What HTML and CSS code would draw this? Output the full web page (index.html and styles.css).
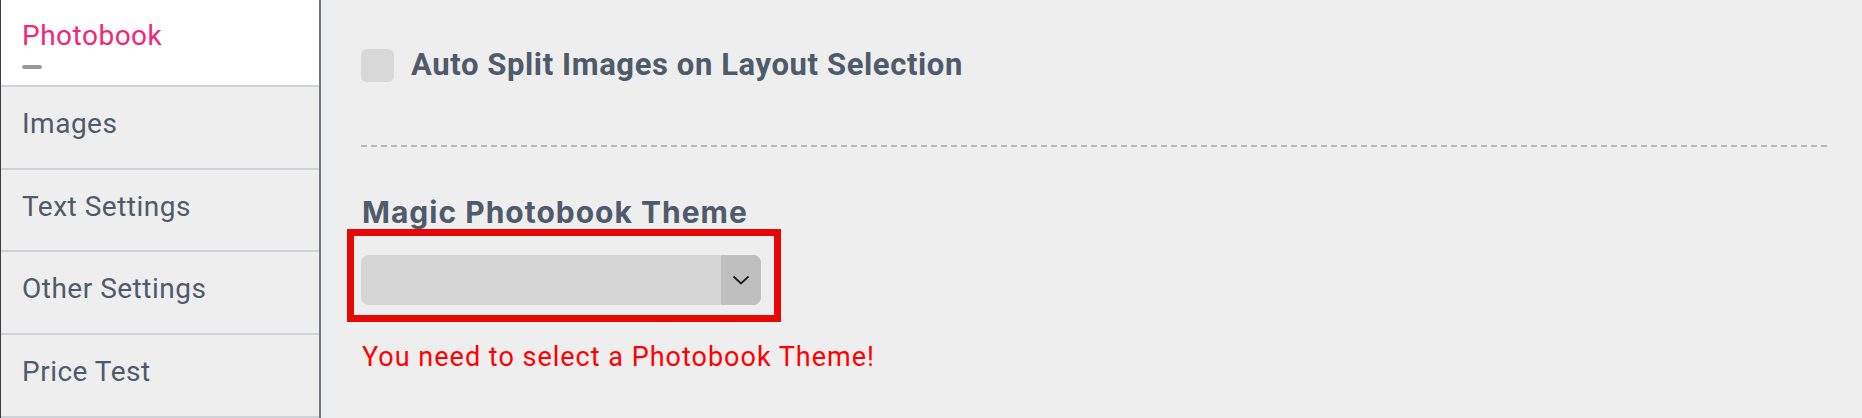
FILE: index.html
```html
<!DOCTYPE html>
<html lang="en">
<head>
<meta charset="utf-8">
<title>Photobook settings</title>
<link rel="stylesheet" href="styles.css">
</head>
<body>
<div class="app">
  <nav class="sidebar">
    <div class="nav-item active">
      <span class="nav-label">Photobook</span>
      <span class="nav-dash"></span>
    </div>
    <div class="nav-item"><span class="nav-label">Images</span></div>
    <div class="nav-item"><span class="nav-label">Text Settings</span></div>
    <div class="nav-item"><span class="nav-label">Other Settings</span></div>
    <div class="nav-item"><span class="nav-label">Price Test</span></div>
  </nav>
  <main class="content">
    <label class="check-row">
      <span class="checkbox"></span>
      <span class="check-label">Auto Split Images on Layout Selection</span>
    </label>
    <div class="divider"></div>
    <h2 class="field-title">Magic Photobook Theme</h2>
    <div class="highlight">
      <div class="select">
        <span class="select-arrow">
          <svg width="18" height="10" viewBox="0 0 18 10"><path d="M1.5 1.5 L9 8.5 L16.5 1.5" fill="none" stroke="#1e1e1e" stroke-width="1.9"/></svg>
        </span>
      </div>
    </div>
    <p class="error">You need to select a Photobook Theme!</p>
  </main>
</div>
</body>
</html>
```
FILE: styles.css
```css
* { box-sizing: border-box; }
html, body { margin: 0; padding: 0; }
body {
  background: #eeeeee;
  font-family: Roboto, "Liberation Sans", sans-serif;
  width: 1862px;
  height: 418px;
  overflow: hidden;
}
.app {
  display: flex;
  height: 418px;
}
.sidebar {
  width: 321px;
  flex: none;
  border-left: 1px solid #3d3d3d;
  border-right: 2px solid #6f7782;
  display: flex;
  flex-direction: column;
  background: #eeeeee;
}
.nav-item {
  height: 83px;
  padding: 21px 0 0 21px;
  border-bottom: 2px solid #cfd2d6;
  display: flex;
  flex-direction: column;
}
.nav-item.active {
  height: 87px;
  padding-top: 20px;
  background: #ffffff;
}
.nav-label {
  font-size: 28px;
  line-height: 32px;
  letter-spacing: 0.5px;
  color: #4f5a6b;
}
.active .nav-label { color: #f0277a; }
.nav-dash {
  width: 20px;
  height: 4px;
  margin-top: 13px;
  border-radius: 2px;
  background: #999999;
}
.content {
  flex: 1;
  padding: 48px 34px 0 40px;
}
.check-row {
  display: flex;
  align-items: center;
  gap: 17px;
}
.checkbox {
  width: 33px;
  height: 33px;
  border-radius: 6px;
  background: #d8d8d8;
}
.check-label {
  font-weight: 700;
  font-size: 31px;
  line-height: 34px;
  letter-spacing: 0.6px;
  color: #4f5a6b;
}
.divider {
  margin-top: 63px;
  height: 2px;
  background: repeating-linear-gradient(to right, #b4b7bc 0 6px, transparent 6px 10px);
}
.field-title {
  margin: 48px 0 0 1px;
  font-family: Inter, "Noto Sans", sans-serif;
  font-weight: 700;
  font-size: 30px;
  line-height: 34px;
  letter-spacing: 1px;
  color: #4f5a6b;
}
.highlight {
  width: 434px;
  margin-left: -14px;
  border: 7px solid #e60707;
  padding: 19px 13px 10px 7px;
}
.select {
  width: 400px;
  height: 50px;
  border-radius: 8px;
  background: #d6d6d6;
  display: flex;
  justify-content: flex-end;
}
.select-arrow {
  width: 40px;
  border-radius: 0 8px 8px 0;
  background: #bfbfbf;
  display: flex;
  align-items: center;
  justify-content: center;
}
.error {
  margin: 20px 0 0 1px;
  font-size: 27px;
  line-height: 30px;
  letter-spacing: 1px;
  color: #ff0000;
}
```
